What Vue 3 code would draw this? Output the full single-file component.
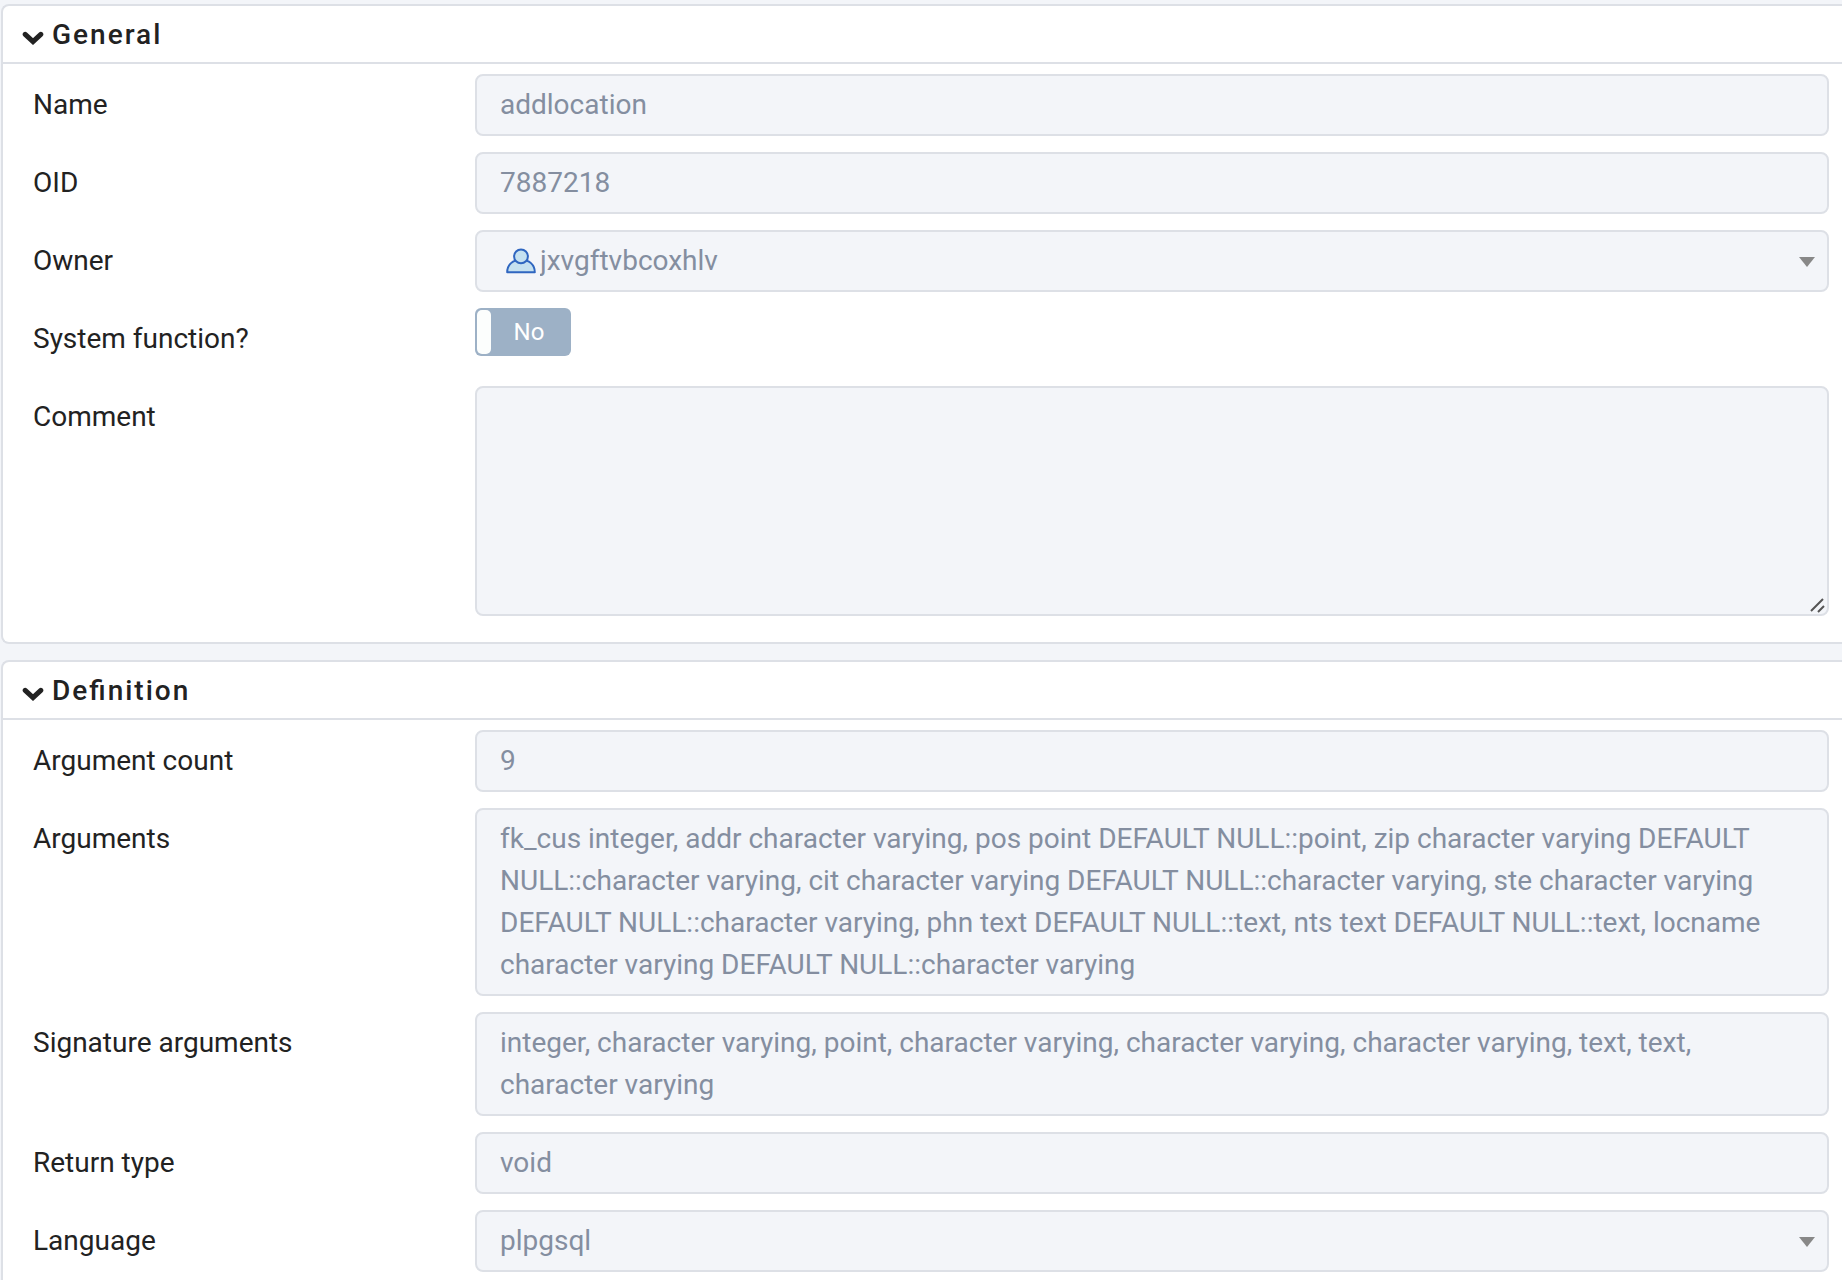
<script setup>
import { ref } from 'vue'

const open = ref({ general: true, definition: true })
const args =
  'fk_cus integer, addr character varying, pos point DEFAULT NULL::point, zip character varying DEFAULT NULL::character varying, cit character varying DEFAULT NULL::character varying, ste character varying DEFAULT NULL::character varying, phn text DEFAULT NULL::text, nts text DEFAULT NULL::text, locname character varying DEFAULT NULL::character varying'
const signature =
  'integer, character varying, point, character varying, character varying, character varying, text, text, character varying'
</script>

<template>
  <main class="properties">
    <section class="card">
      <h2 class="card-header">
        <button type="button" class="toggle-btn" :aria-expanded="open.general" @click="open.general = !open.general">
          <svg class="chevron" width="22" height="14" viewBox="0 0 22 14" aria-hidden="true">
            <path d="M3.2 3.3 11 10.6 18.8 3.3" />
          </svg>
          <span>General</span>
        </button>
      </h2>
      <div v-show="open.general" class="card-body">
        <div class="row">
          <label for="name">Name</label>
          <input id="name" class="field" type="text" value="addlocation" disabled />
        </div>
        <div class="row">
          <label for="oid">OID</label>
          <input id="oid" class="field" type="text" value="7887218" disabled />
        </div>
        <div class="row">
          <label for="owner">Owner</label>
          <div class="control">
            <select id="owner" class="field with-icon" disabled>
              <option>jxvgftvbcoxhlv</option>
            </select>
            <svg class="role" width="30" height="26" viewBox="0 0 30 26" aria-hidden="true">
              <path d="M1.2 24.3C1.2 16.5 6.8 11.8 15 11.8S28.8 16.5 28.8 24.3Z" />
              <circle cx="15" cy="8.4" r="6.9" />
            </svg>
            <svg class="caret" width="16" height="10" viewBox="0 0 16 10" aria-hidden="true">
              <path d="M0 0H16L8 10Z" />
            </svg>
          </div>
        </div>
        <div class="row">
          <label for="system">System function?</label>
          <div class="control">
            <input id="system" class="switch-input" type="checkbox" disabled />
            <span class="switch" aria-hidden="true">
              <span class="knob"></span>
              <span class="switch-text">No</span>
            </span>
          </div>
        </div>
        <div class="row">
          <label for="comment">Comment</label>
          <div class="control">
            <textarea id="comment" class="field comment" disabled></textarea>
            <svg class="grip" width="16" height="16" viewBox="0 0 16 16" aria-hidden="true">
              <path d="M2 14 14 2M9 15 15 9" />
            </svg>
          </div>
        </div>
      </div>
    </section>

    <section class="card last">
      <h2 class="card-header">
        <button type="button" class="toggle-btn" :aria-expanded="open.definition" @click="open.definition = !open.definition">
          <svg class="chevron" width="22" height="14" viewBox="0 0 22 14" aria-hidden="true">
            <path d="M3.2 3.3 11 10.6 18.8 3.3" />
          </svg>
          <span>Definition</span>
        </button>
      </h2>
      <div v-show="open.definition" class="card-body">
        <div class="row">
          <label for="argcount">Argument count</label>
          <input id="argcount" class="field" type="text" value="9" disabled />
        </div>
        <div class="row">
          <label for="args">Arguments</label>
          <textarea id="args" class="field auto" :value="args" disabled></textarea>
        </div>
        <div class="row">
          <label for="sig">Signature arguments</label>
          <textarea id="sig" class="field auto" :value="signature" disabled></textarea>
        </div>
        <div class="row">
          <label for="rettype">Return type</label>
          <input id="rettype" class="field" type="text" value="void" disabled />
        </div>
        <div class="row">
          <label for="language">Language</label>
          <div class="control">
            <select id="language" class="field" disabled>
              <option>plpgsql</option>
            </select>
            <svg class="caret" width="16" height="10" viewBox="0 0 16 10" aria-hidden="true">
              <path d="M0 0H16L8 10Z" />
            </svg>
          </div>
        </div>
      </div>
    </section>
  </main>
</template>

<style>
body {
  background: #f3f5f9;
}
</style>

<style scoped>
.properties {
  box-sizing: border-box;
  min-height: 100vh;
  padding: 4px 0 0 1px;
  display: flex;
  flex-direction: column;
  gap: 16px;
  font-family: Roboto, sans-serif;
  font-size: 28px;
  line-height: 42px;
  color: #222;
}
.card {
  background: #fff;
  border: 2px solid #dde0e6;
  border-right: 0;
  border-radius: 8px 0 0 8px;
}
.card.last {
  flex: 1;
  border-bottom: 0;
  border-bottom-left-radius: 0;
}
.card-header {
  margin: 0;
  border-bottom: 2px solid #dde0e6;
}
.toggle-btn {
  display: flex;
  align-items: center;
  gap: 8px;
  width: 100%;
  height: 56px;
  padding: 2px 19px 0;
  border: 0;
  background: none;
  font: inherit;
  font-size: 28px;
  font-weight: 500;
  letter-spacing: 2px;
  font-feature-settings: "liga" 1;
  color: inherit;
  text-align: left;
}
.chevron {
  margin-top: 6px;
  fill: none;
  stroke: #222;
  stroke-width: 5;
  stroke-linecap: round;
}
.card-body {
  display: flex;
  flex-direction: column;
  gap: 16px;
  padding: 10px 13px 26px 30px;
}
.last .card-body {
  padding-bottom: 8px;
}
.row {
  display: grid;
  grid-template-columns: minmax(220px, 442px) minmax(0, 1fr);
  align-items: start;
  min-height: 62px;
}
label {
  padding-top: 10px;
}
.control {
  position: relative;
  display: flex;
}
.field {
  box-sizing: border-box;
  display: block;
  width: 100%;
  height: 62px;
  margin: 0;
  padding: 8px 23px;
  border: 2px solid #dde0e6;
  border-radius: 8px;
  background: #f3f5f9;
  font: inherit;
  color: #848ea0;
  opacity: 1;
  appearance: none;
  resize: none;
}
input.field {
  padding-top: 7px;
  padding-bottom: 9px;
}
.field.with-icon {
  padding-left: 63px;
}
.field.comment {
  height: 230px;
}
.field.auto {
  height: auto;
  field-sizing: content;
}
.role {
  position: absolute;
  left: 31px;
  top: 18px;
  fill: #c5e1f0;
  stroke: #2f66c0;
  stroke-width: 2;
  stroke-linejoin: round;
}
.caret {
  position: absolute;
  right: 14px;
  top: 27px;
  fill: #888;
}
.grip {
  position: absolute;
  right: 4px;
  bottom: 3px;
  stroke: #555;
  stroke-width: 2;
}
.switch-input {
  position: absolute;
  width: 96px;
  height: 48px;
  margin: 0;
  opacity: 0;
}
.switch {
  box-sizing: border-box;
  display: flex;
  align-items: stretch;
  width: 96px;
  height: 48px;
  padding: 2px;
  border-radius: 6px;
  background: #9db1c6;
}
.knob {
  width: 14px;
  border-radius: 5px;
  background: #fcfefd;
}
.switch-text {
  flex: 1;
  padding-right: 2px;
  font-size: 24px;
  line-height: 44px;
  text-align: center;
  color: #fff;
}
</style>
